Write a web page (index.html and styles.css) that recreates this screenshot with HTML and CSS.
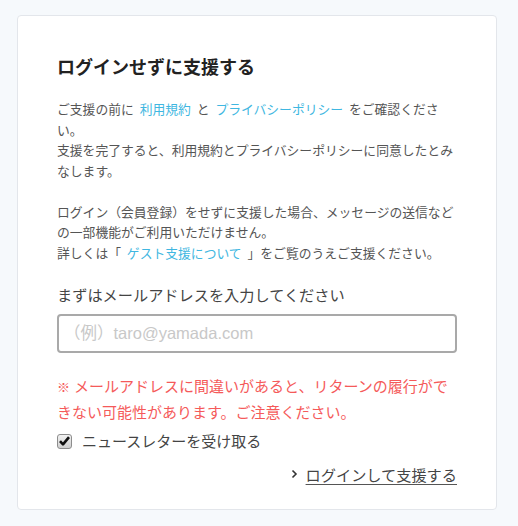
FILE: index.html
```html
<!DOCTYPE html>
<html lang="ja">
<head>
<meta charset="utf-8">
<title>ログインせずに支援する</title>
<link rel="stylesheet" href="styles.css">
</head>
<body>
<div class="card">
  <h1 class="title">ログインせずに支援する</h1>
  <p class="para">ご支援の前に <a class="link" href="#">利用規約</a> と <a class="link" href="#">プライバシーポリシー</a> をご確認ください。<br>支援を完了すると、利用規約とプライバシーポリシーに同意したとみなします。</p>
  <p class="para">ログイン（会員登録）をせずに支援した場合、メッセージの送信などの一部機能がご利用いただけません。<br>詳しくは「 <a class="link" href="#">ゲスト支援について</a> 」をご覧のうえご支援ください。</p>
  <div class="label">まずはメールアドレスを入力してください</div>
  <input class="email" type="email" placeholder="（例）taro@yamada.com">
  <p class="warn"><span class="mark">※</span>メールアドレスに間違いがあると、リターンの履行ができない可能性があります。ご注意ください。</p>
  <label class="check">
    <span class="box"><svg width="11" height="10" viewBox="0 0 11 10"><path d="M1 5.2 L4 8.4 L10 1.2" fill="none" stroke="#111" stroke-width="2.6" stroke-linejoin="round"/></svg></span>
    <span class="check-text">ニュースレターを受け取る</span>
  </label>
  <div class="actions">
    <svg class="chev" width="7" height="10" viewBox="0 0 7 10"><path d="M1.5 1.5 L5 5 L1.5 8.5" fill="none" stroke="#333" stroke-width="1.6"/></svg>
    <a class="login" href="#">ログインして支援する</a>
  </div>
</div>
</body>
</html>
```

FILE: styles.css
```css
html, body {
  margin: 0;
  padding: 0;
  background: #f6f9fc;
}
body {
  padding: 15px 0 0 17px;
  font-family: "Noto Sans CJK JP", "Noto Sans", sans-serif;
  color: #444;
}
.card {
  width: 400px;
  background: #fff;
  border: 1px solid #e3e6eb;
  border-radius: 4px;
  padding: 37px 39px 24px;
}
.title {
  margin: 0;
  font-size: 18px;
  line-height: 26px;
  font-weight: 700;
  color: #222;
}
.para {
  margin: 20px 0 0;
  font-size: 12.8px;
  line-height: 20.5px;
  color: #555;
}
.para + .para {
  margin-top: 20.5px;
}
.link {
  color: #3fb7e1;
  text-decoration: none;
  margin: 0 3px;
}
.label {
  margin-top: 19px;
  font-size: 15.2px;
  line-height: 24px;
  color: #444;
}
.email {
  display: block;
  box-sizing: border-box;
  width: 400px;
  height: 39px;
  margin: 8px 0 0;
  padding: 0 5px;
  border: 2px solid #a9a9a9;
  border-radius: 4px;
  font-family: "Liberation Sans", "Noto Sans CJK JP", sans-serif;
  font-size: 16.5px;
  color: #333;
  background: #fff;
}
.email::placeholder {
  color: #c8c8c8;
}
.warn {
  margin: 20px 0 0;
  font-size: 15px;
  line-height: 25px;
  color: #f55a5a;
}
.mark {
  font-size: 13px;
  font-weight: 700;
  margin-right: 4px;
}
.check {
  display: flex;
  align-items: center;
  margin-top: 6px;
  height: 22px;
}
.box {
  box-sizing: border-box;
  width: 15px;
  height: 15px;
  border: 1px solid #8d8d8d;
  border-radius: 3px;
  background: linear-gradient(#f2f2f2, #cfcfcf);
  display: flex;
  align-items: center;
  justify-content: center;
}
.check-text {
  margin-left: 10px;
  font-size: 15px;
  line-height: 22px;
  color: #444;
}
.actions {
  display: flex;
  justify-content: flex-end;
  align-items: center;
  margin-top: 11px;
  gap: 8px;
}
.chev {
  display: block;
}
.login {
  font-size: 15.2px;
  line-height: 22px;
  color: #444;
  text-decoration: underline;
  text-underline-offset: 3px;
  text-decoration-color: #555;
}
```
